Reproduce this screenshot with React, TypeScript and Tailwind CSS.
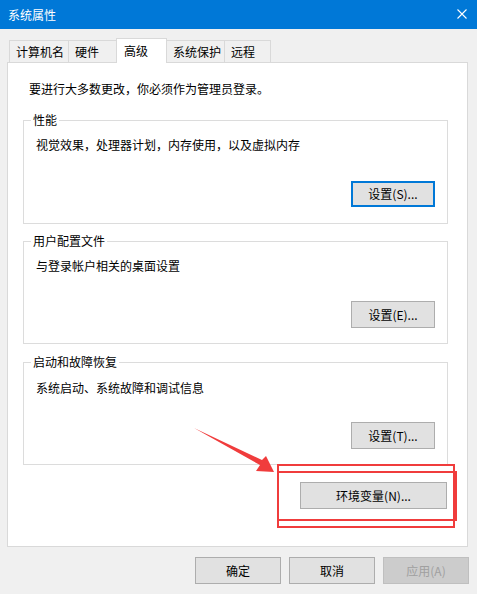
import React from "react";

const font = { fontFamily: '"Noto Sans CJK SC", "Noto Sans", sans-serif' };

type Tab = { label: string; w: string; active?: boolean; noLeft?: boolean; last?: boolean };

const tabs: Tab[] = [
  { label: "计算机名", w: "w-[59px]" },
  { label: "硬件", w: "w-[48px]" },
  { label: "高级", w: "w-[51px]", active: true },
  { label: "系统保护", w: "w-[57px]", noLeft: true },
  { label: "远程", w: "w-[47px]", last: true },
];

function Btn({ children, focused, className = "" }: { children: React.ReactNode; focused?: boolean; className?: string }) {
  return (
    <div
      className={
        "flex items-center justify-center bg-[#e1e1e1] text-[12px] leading-[16px] text-black " +
        (focused ? "border-2 border-[#0078d7] " : "border border-[#adadad] ") +
        className
      }
    >
      {children}
    </div>
  );
}

function Group({
  title,
  text,
  btn,
  h,
  pt,
  mt,
  focused,
  btnH,
}: {
  title: string;
  text: string;
  btn: string;
  h: string;
  pt: string;
  mt: string;
  focused?: boolean;
  btnH: string;
}) {
  return (
    <div className={"relative ml-[15px] w-[425px] border border-[#dcdcdc] flex flex-col pl-[12px] pr-[12px] " + h + " " + pt}>
      <span className="absolute left-[7px] -top-[9px] bg-white px-[2px] text-[12px] leading-[16px]">{title}</span>
      <div className="text-[12px] leading-[16px]">{text}</div>
      <div className={"flex justify-end " + mt}>
        <Btn focused={focused} className={"w-[84px] " + btnH}>
          {btn}
        </Btn>
      </div>
    </div>
  );
}

export default function App() {
  return (
    <div className="relative w-[477px] h-[594px] bg-[#f0f0f0] overflow-hidden text-black" style={font}>
      {/* 标题栏 */}
      <div className="h-[29px] bg-[#0078d7] flex items-center justify-between pl-[8px] pr-[10px]">
        <span className="text-white text-[12px] leading-[16px]">系统属性</span>
        <svg width="10" height="10" viewBox="0 0 10 10" className="mt-[-1px]">
          <path d="M0.5 0.5 L9.5 9.5 M9.5 0.5 L0.5 9.5" stroke="white" strokeWidth="1.1" />
        </svg>
      </div>

      {/* 选项卡 */}
      <div className="mt-[9px] h-[24px] flex items-end pl-[9px]">
        {tabs.map((t) => (
          <div
            key={t.label}
            className={
              "flex items-center pl-[6px] text-[12px] leading-[16px] border-t border-[#d9d9d9] " +
              t.w +
              (t.noLeft ? " " : " border-l ") +
              (t.active ? "relative z-10 h-[25px] -mb-[1px] bg-white border-r pl-[7px] pb-[1px]" : "h-[22px] bg-[#f0f0f0]") +
              (t.last ? " border-r" : "")
            }
          >
            {t.label}
          </div>
        ))}
      </div>

      {/* 内容面板 */}
      <div className="ml-[7px] w-[461px] h-[485px] border border-[#d9d9d9] bg-white flex flex-col">
        <div className="pl-[21px] pt-[18px] text-[12px] leading-[16px]">要进行大多数更改，你必须作为管理员登录。</div>
        <div className="mt-[23px]">
          <Group title="性能" text="视觉效果，处理器计划，内存使用，以及虚拟内存" btn="设置(S)..." h="h-[104px]" pt="pt-[16px]" mt="mt-[28px]" focused btnH="h-[26px]" />
        </div>
        <div className="mt-[17px]">
          <Group title="用户配置文件" text="与登录帐户相关的桌面设置" btn="设置(E)..." h="h-[103px]" pt="pt-[16px]" mt="mt-[27px]" btnH="h-[27px]" />
        </div>
        <div className="mt-[18px]">
          <Group title="启动和故障恢复" text="系统启动、系统故障和调试信息" btn="设置(T)..." h="h-[103px]" pt="pt-[17px]" mt="mt-[26px]" btnH="h-[27px]" />
        </div>
        <div className="mt-[17px] ml-[15px] w-[425px] flex justify-end pr-[1px]">
          <Btn className="w-[147px] h-[27px]">环境变量(N)...</Btn>
        </div>
      </div>

      {/* 底部按钮 */}
      <div className="mt-[10px] flex justify-end gap-[8px] pr-[8px]">
        <Btn className="w-[86px] h-[27px]">确定</Btn>
        <Btn className="w-[86px] h-[27px]">取消</Btn>
        <div className="w-[86px] h-[27px] flex items-center justify-center bg-[#cccccc] border border-[#bfbfbf] text-[12px] leading-[16px] text-[#a0a0a0]">
          应用(A)
        </div>
      </div>

      {/* 红色标注 */}
      <div className="absolute left-[277px] top-[464px] w-[178px] h-[64px] border-2 border-[#f03c3c] pointer-events-none" />
      <div className="absolute left-[277px] top-[471px] w-[180px] h-[50px] border-2 border-[#f03c3c] pointer-events-none" />
      <svg className="absolute left-[190px] top-[424px] pointer-events-none" width="90" height="52" viewBox="190 424 90 52">
        <polygon points="194,428 262,460 266,456 274,472 256,471 260,465" fill="#f03c3c" />
      </svg>
    </div>
  );
}
